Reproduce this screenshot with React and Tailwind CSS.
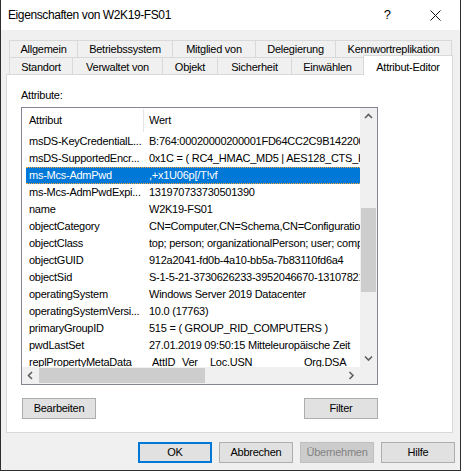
import clsx from 'clsx';

const rows = [
  ['msDS-KeyCredentialL...', 'B:764:00020000200001FD64CC2C9B14220001FD64CC'],
  ['msDS-SupportedEncr...', '0x1C = ( RC4_HMAC_MD5 | AES128_CTS_HMAC_SHA1_96 )'],
  ['ms-Mcs-AdmPwd', ',+x1U06p[/T!vf'],
  ['ms-Mcs-AdmPwdExpi...', '131970733730501390'],
  ['name', 'W2K19-FS01'],
  ['objectCategory', 'CN=Computer,CN=Schema,CN=Configuration,DC=lab'],
  ['objectClass', 'top; person; organizationalPerson; user; computer'],
  ['objectGUID', '912a2041-fd0b-4a10-bb5a-7b83110fd6a4'],
  ['objectSid', 'S-1-5-21-3730626233-3952046670-1310782101-1104'],
  ['operatingSystem', 'Windows Server 2019 Datacenter'],
  ['operatingSystemVersi...', '10.0 (17763)'],
  ['primaryGroupID', '515 = ( GROUP_RID_COMPUTERS )'],
  ['pwdLastSet', '27.01.2019 09:50:15 Mitteleuropäische Zeit'],
  ['replPropertyMetaData', null],
];

const topTabs = [
  ['Allgemein', 'w-[68px]'],
  ['Betriebssystem', 'w-[95px]'],
  ['Mitglied von', 'w-[83px]'],
  ['Delegierung', 'w-[80px]'],
  ['Kennwortreplikation', 'w-[117px] border-r'],
];

const frontTabs = [
  ['Standort', 'w-[63px]'],
  ['Verwaltet von', 'w-[90px]'],
  ['Objekt', 'w-[55px]'],
  ['Sicherheit', 'w-[74px]'],
  ['Einwählen', 'w-[72px]'],
];

function Chevron({ dir }) {
  const d = {
    up: 'M1 5 L4.5 1.5 L8 5',
    down: 'M1 1.5 L4.5 5 L8 1.5',
    left: 'M5 1 L1.5 4.5 L5 8',
    right: 'M1.5 1 L5 4.5 L1.5 8',
  }[dir];
  const vertical = dir === 'up' || dir === 'down';
  return (
    <svg width={vertical ? 9 : 7} height={vertical ? 7 : 9} viewBox={vertical ? '0 0 9 7' : '0 0 7 9'}>
      <path d={d} fill="none" stroke="#606060" strokeWidth="1.6" />
    </svg>
  );
}

function Btn({ children, primary, disabled }) {
  return (
    <div
      className={clsx(
        'flex h-[21px] w-[74px] items-center justify-center text-[11px] tracking-[-0.25px]',
        primary && 'border-2 border-[#0078d7] bg-[#e1e1e1] text-black',
        disabled && 'border border-[#bfbfbf] bg-[#cccccc] text-[#838383]',
        !primary && !disabled && 'border border-[#adadad] bg-[#e1e1e1] text-black'
      )}
    >
      {children}
    </div>
  );
}

function MetaValue() {
  return (
    <div className="flex whitespace-nowrap">
      <span className="ml-[3px] w-[30px]">AttID</span>
      <span className="w-[28px]">Ver</span>
      <span className="w-[94px]">Loc.USN</span>
      <span>Org.DSA</span>
    </div>
  );
}

export default function App() {
  return (
    <div
      className="flex h-[471px] w-[461px] flex-col border-x border-b border-[#2e2e2e] bg-white text-black"
      style={{ fontFamily: '"Liberation Sans", Arial, sans-serif' }}
    >
      {/* title bar */}
      <div className="flex h-[30px] shrink-0 items-center bg-white pl-[7px]">
        <span className="text-[12px] tracking-[-0.4px]">Eigenschaften von W2K19-FS01</span>
        <span className="ml-auto mr-[39px] text-[13px]">?</span>
        <svg width="11" height="11" viewBox="0 0 11 11" className="mr-[19px]">
          <path d="M0.5 0.5 L10.5 10.5 M10.5 0.5 L0.5 10.5" stroke="#111" strokeWidth="1" />
        </svg>
      </div>

      {/* body */}
      <div className="flex flex-1 flex-col bg-[#f0f0f0] pl-[5px] pr-[5px] pt-[10px] text-[11px] tracking-[-0.25px]">
        <div className="flex h-[17px] pl-[3px]">
          {topTabs.map(([label, cls]) => (
            <div key={label} className={clsx('flex items-center justify-center border-l border-t border-[#d9d9d9] bg-[#f0f0f0]', cls)}>
              {label}
            </div>
          ))}
        </div>
        <div className="relative z-10 -mt-[2px] flex h-[19px] items-end pl-[3px]">
          {frontTabs.map(([label, cls]) => (
            <div key={label} className={clsx('flex h-[17px] items-center justify-center border-l border-t border-[#d9d9d9] bg-[#f0f0f0] pt-[2px]', cls)}>
              {label}
            </div>
          ))}
          <div className="-mb-px flex h-[20px] w-[90px] items-start justify-center border-x border-t border-[#d9d9d9] bg-white pt-[3px]">
            Attribut-Editor
          </div>
        </div>

        {/* panel */}
        <div className="w-[447px] border border-[#d9d9d9] bg-white pb-[13px] pl-[14px] pt-[14px]">
          <div className="h-[13px] leading-[13px]">Attribute:</div>
          <div className="mt-[5px] grid h-[278px] w-[357px] grid-cols-[1fr_17px] grid-rows-[1fr_17px] border border-[#828790]">
            <div className="overflow-hidden">
              <div className="flex h-[25px] items-center">
                <div className="flex h-[23px] w-[121px] items-center pl-[7px]">Attribut</div>
                <div className="h-[23px] w-px bg-[#e5e5e5]" />
                <div className="pl-[5px]">Wert</div>
              </div>
              {rows.map(([name, value]) => {
                const sel = name === 'ms-Mcs-AdmPwd';
                return (
                  <div key={name} className="h-[17px] pl-[4px]">
                    <div
                      className={clsx(
                        'flex h-[17px] items-center whitespace-nowrap',
                        sel && 'border-y border-dotted border-[#f2a33a] bg-[#0078d7] text-white'
                      )}
                    >
                      <div className="w-[117px] shrink-0 pl-[3px]">{name}</div>
                      <div className="shrink-0 pl-[6px]">{value === null ? <MetaValue /> : value}</div>
                    </div>
                  </div>
                );
              })}
            </div>
            {/* vertical scrollbar */}
            <div className="flex flex-col bg-[#f0f0f0]">
              <div className="flex h-[17px] items-center justify-center">
                <Chevron dir="up" />
              </div>
              <div className="h-[83px]" />
              <div className="mx-px h-[84px] bg-[#cdcdcd]" />
              <div className="flex-1" />
              <div className="flex h-[17px] items-center justify-center">
                <Chevron dir="down" />
              </div>
            </div>
            {/* horizontal scrollbar */}
            <div className="flex items-center bg-[#f0f0f0]">
              <div className="flex h-[17px] w-[17px] items-center justify-center">
                <Chevron dir="left" />
              </div>
              <div className="my-px h-[15px] w-[166px] bg-[#cdcdcd]" />
              <div className="flex-1" />
              <div className="flex h-[17px] w-[17px] items-center justify-center">
                <Chevron dir="right" />
              </div>
            </div>
            <div className="bg-[#f0f0f0]" />
          </div>
          <div className="mt-[13px] flex w-[357px] justify-between pl-px">
            <Btn>Bearbeiten</Btn>
            <Btn>Filter</Btn>
          </div>
        </div>

        <div className="mt-[9px] flex justify-end gap-[7px]">
          <Btn primary>OK</Btn>
          <Btn>Abbrechen</Btn>
          <Btn disabled>Übernehmen</Btn>
          <Btn>Hilfe</Btn>
        </div>
      </div>
    </div>
  );
}
